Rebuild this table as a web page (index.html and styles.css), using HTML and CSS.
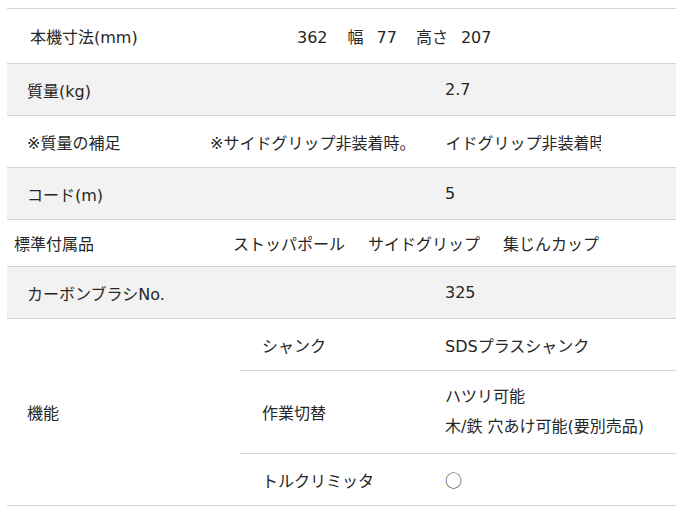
FILE: index.html
```html
<!DOCTYPE html>
<html lang="ja">
<head>
<meta charset="utf-8">
<link rel="stylesheet" href="styles.css">
</head>
<body>
<div class="spec">
  <div class="row r-top h54">
    <div class="label w290 pl23">本機寸法(mm)</div>
    <div class="value dims"><span class="d1">362</span><span class="d2">幅</span><span class="d3">77</span><span class="d4">高さ</span><span>207</span></div>
  </div>
  <div class="row grey h51">
    <div class="label w438">質量(kg)</div>
    <div class="value">2.7</div>
  </div>
  <div class="row h51">
    <div class="label w203">※質量の補足</div>
    <div class="value note"><span class="note-a">※サイドグリップ非装着時。</span><span class="note-b">イドグリップ非装着時。</span></div>
  </div>
  <div class="row grey h51">
    <div class="label w438">コード(m)</div>
    <div class="value">5</div>
  </div>
  <div class="row h46">
    <div class="label w226 pl7">標準付属品</div>
    <div class="value acc"><span>ストッパポール</span><span>サイドグリップ</span><span>集じんカップ</span></div>
  </div>
  <div class="row grey h51">
    <div class="label w438">カーボンブラシNo.</div>
    <div class="value">325</div>
  </div>
  <div class="group">
    <div class="group-label">機能</div>
    <div class="subrows">
      <div class="sub h51">
        <div class="sub-label">シャンク</div>
        <div class="sub-value">SDSプラスシャンク</div>
      </div>
      <div class="sub h82">
        <div class="sub-label">作業切替</div>
        <div class="sub-value lines"><span>ハツリ可能</span><span>木/鉄 穴あけ可能(要別売品)</span></div>
      </div>
      <div class="sub h51 last">
        <div class="sub-label">トルクリミッタ</div>
        <div class="sub-value"><span class="circle">○</span></div>
      </div>
    </div>
  </div>
</div>
</body>
</html>
```
FILE: styles.css
```css
html, body {
  margin: 0;
  padding: 0;
  background: #fff;
}
body {
  font-family: "DejaVu Sans", "Noto Sans CJK JP", sans-serif;
  font-size: 16px;
  color: #262626;
}
.spec {
  margin: 8px 0 0 7px;
  width: 669px;
}
.row {
  display: flex;
  align-items: center;
  border-bottom: 1px solid #d2d2d2;
  box-sizing: content-box;
  white-space: nowrap;
}
.r-top {
  border-top: 1px solid #d2d2d2;
}
.grey {
  background: #f2f2f2;
}
.h54 { height: 54px; }
.h51 { height: 51px; }
.h46 { height: 46px; }
.h82 { height: 82px; }
.label {
  padding-left: 20px;
  flex: none;
  box-sizing: border-box;
}
.w290 { width: 290px; }
.w438 { width: 438px; }
.w203 { width: 203px; }
.w226 { width: 226px; }
.pl23 { padding-left: 23px; }
.pl7 { padding-left: 7px; }
.value {
  flex: none;
}
.dims {
  display: flex;
  align-items: baseline;
}
.dims .d1 { margin-right: 20px; }
.dims .d2 { margin-right: 13px; }
.dims .d3 { margin-right: 19px; }
.dims .d4 { margin-right: 13px; }
.note {
  display: flex;
  align-items: baseline;
}
.note-a {
  margin-right: 30px;
}
.note-b {
  display: inline-block;
  width: 156px;
  overflow: hidden;
}
.acc {
  display: flex;
  align-items: baseline;
  gap: 23px;
}
.group {
  display: flex;
  border-bottom: 1px solid #d2d2d2;
}
.group-label {
  width: 213px;
  padding-left: 20px;
  flex: none;
  display: flex;
  align-items: center;
}
.subrows {
  flex: 1;
}
.sub {
  display: flex;
  align-items: center;
  border-bottom: 1px solid #d2d2d2;
  box-sizing: content-box;
}
.sub.last {
  border-bottom: none;
}
.sub-label {
  width: 183px;
  padding-left: 22px;
  flex: none;
}
.sub-value {
  white-space: nowrap;
}
.circle {
  font-family: "Noto Sans CJK JP", sans-serif;
  font-size: 17px;
  color: #444;
}
.lines {
  display: flex;
  flex-direction: column;
  line-height: 30px;
}
```
